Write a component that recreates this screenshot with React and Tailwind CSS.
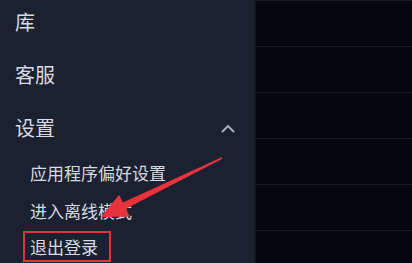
import React from "react";

const font = { fontFamily: '"Noto Sans CJK SC", "Noto Sans", sans-serif' };

const Chevron = () => (
  <svg width="14" height="9" viewBox="0 0 14 9" fill="none">
    <path d="M1.5 7.5 L7 2 L12.5 7.5" stroke="#a9aeb8" strokeWidth="2" strokeLinecap="round" strokeLinejoin="round" />
  </svg>
);

const Arrow = () => (
  <svg className="absolute left-0 top-0 pointer-events-none" width="412" height="263" viewBox="0 0 412 263">
    <path
      d="M101 217 L119.1 194.8 L122.9 202.5 L221.6 157.3 L222.4 158.7 L125.9 208.8 L129.7 216.4 Z"
      fill="#e8333b"
    />
  </svg>
);

const App = () => {
  const rows = [0, 1, 2, 3, 4, 5];
  return (
    <div className="relative flex w-[412px] h-[263px] overflow-hidden bg-[#04080c]" style={font}>
      <aside className="w-[254px] shrink-0 bg-[#1b2131] text-[#d7dae0] flex flex-col">
        <div className="h-[20px] mt-[12px] pl-[15px] text-[20px] leading-[20px]">库</div>
        <div className="h-[20px] mt-[33px] pl-[15px] text-[20px] leading-[20px]">客服</div>
        <div className="h-[20px] mt-[33px] pl-[15px] pr-[19px] text-[20px] leading-[20px] flex items-center justify-between">
          <span>设置</span>
          <Chevron />
        </div>
        <div className="mt-[26px] pl-[30px] text-[17px] leading-[17px] h-[17px]">应用程序偏好设置</div>
        <div className="mt-[21px] pl-[30px] text-[17px] leading-[17px] h-[17px]">进入离线模式</div>
        <div className="mt-[12px] ml-[23px] w-[88px] h-[31px] border-2 border-[#e0343b] flex items-center pl-[5px] text-[17px] leading-[17px]">
          退出登录
        </div>
      </aside>
      <div className="w-[2px] bg-[#10161f]" />
      <main className="flex-1 flex flex-col">
        <div className="h-[8px]" />
        {rows.map((r) => (
          <div key={r} className="h-[46px] shrink-0 border-t border-[#141a20]" />
        ))}
      </main>
      <Arrow />
    </div>
  );
};

export default App;
